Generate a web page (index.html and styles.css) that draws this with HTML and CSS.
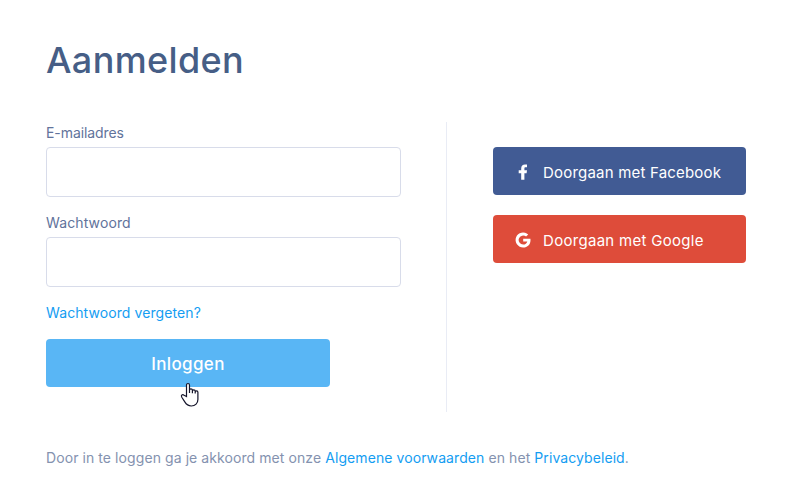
FILE: index.html
```html
<!DOCTYPE html>
<html lang="nl">
<head>
<meta charset="utf-8">
<title>Aanmelden</title>
<link rel="stylesheet" href="styles.css">
</head>
<body>

<main class="login">
  <h1 class="title">Aanmelden</h1>

  <div class="columns">
    <form class="login-form">
      <label class="label label-email" for="email">E-mailadres</label>
      <input class="input" type="email" id="email">

      <label class="label label-password" for="password">Wachtwoord</label>
      <input class="input" type="password" id="password">

      <a class="link forgot" href="#">Wachtwoord vergeten?</a>

      <button class="btn btn-login" type="button">
        <span class="btn-login-text">Inloggen</span>
        <svg class="cursor" width="20" height="26" viewBox="0 0 20 26">
          <path d="M6.5 14.5V3.2c0-2.3 3-2.3 3 0V11V8.200c0-1.700 2.900-1.700 2.900 0V11.300V9c0-1.600 2.800-1.600 2.800 0v2.600V10c0-1.500 2.700-1.500 2.700.2v7.300c0 3.600-2.600 6.500-6.600 6.500-3.200 0-5-1.600-6.500-4.100L1.800 15.200c-1.200-2 .7-3.200 2.300-1.900z"/>
        </svg>
      </button>
    </form>

    <div class="social">
      <a class="btn btn-social facebook" href="#">
        <svg class="icon" width="16" height="16" viewBox="0 0 16 16">
          <path d="M6.200 15.700V9.200H3.700V6.300H6.200V4.400C6.200 1.800 7.700.4 10 .4c1 0 1.700.1 2 .1V3.200h-1.300C9.600 3.200 9.400 3.700 9.400 4.500v1.800H12l-.4 2.900H9.400v6.500z"/>
        </svg>
        <span class="facebook-text">Doorgaan met Facebook</span>
      </a>
      <a class="btn btn-social google" href="#">
        <svg class="icon" width="16" height="16" viewBox="0 0 16 16">
          <path d="M8.200 6.700v2.700h4.100c-.5 1.900-2 3.100-4.100 3.100a4.500 4.500 0 1 1 2.900-7.900l2.100-2.100A7.500 7.500 0 1 0 8.200 15.500c4.300 0 7.300-3 7.300-7.300 0-.5 0-1-.1-1.500z"/>
        </svg>
        <span class="google-text">Doorgaan met Google</span>
      </a>
    </div>
  </div>

  <p class="terms"><span class="terms-intro">Door in te loggen ga je akkoord met onze </span><a class="link terms-link" href="#">Algemene voorwaarden</a> en het <a class="link privacy-link" href="#">Privacybeleid</a>.</p>
</main>

</body>
</html>
```

FILE: styles.css
```css
* {
  box-sizing: border-box;
}

body {
  margin: 0;
  background: #fff;
  font-family: Inter, "Liberation Sans", sans-serif;
  font-size: 14px;
  color: #8492af;
}

.login {
  padding: 36px 45px 0 46px;
}

.title {
  margin: 0;
  height: 86px;
  font-size: 36px;
  line-height: 48px;
  font-weight: 500;
  letter-spacing: 0.35px;
  color: #465e86;
}

.columns {
  display: flex;
  height: 290px;
}

.login-form {
  display: flex;
  flex-direction: column;
  align-items: flex-start;
  width: 401px;
  padding-right: 46px;
  border-right: 1px solid #e9ecf5;
}

.label {
  height: 25px;
  line-height: 22px;
  color: #61739b;
}

.label-email {
  letter-spacing: -0.08px;
}

.label-password {
  letter-spacing: 0.12px;
}

.input {
  width: 355px;
  height: 50px;
  margin-bottom: 15px;
  padding: 0 15px;
  border: 1px solid #d8dcea;
  border-radius: 4px;
  font: inherit;
}

.link {
  color: #149df2;
  text-decoration: none;
}

.forgot {
  height: 37px;
  line-height: 22px;
  letter-spacing: 0.09px;
}

.btn {
  border: 0;
  border-radius: 4px;
  height: 48px;
  color: #fff;
  font-family: inherit;
  text-decoration: none;
}

.btn-login {
  position: relative;
  width: 284px;
  padding: 2px 0 0;
  background: #59b6f5;
  font-size: 17px;
  font-weight: 500;
  letter-spacing: 0.35px;
  cursor: pointer;
}

/* Pointer over the login button */
.cursor {
  position: absolute;
  left: 134px;
  top: 43px;
  fill: #fff;
  stroke: #15152b;
  stroke-width: 1.2;
}

.social {
  flex: 1;
  padding: 25px 0 0 46px;
}

.btn-social {
  display: flex;
  align-items: center;
  margin-bottom: 20px;
  padding: 2px 22px 0;
  font-size: 15px;
  white-space: nowrap;
}

.facebook {
  background: #415b94;
  letter-spacing: 0.2px;
}

.google {
  background: #de4c3a;
  letter-spacing: 0.3px;
}

.icon {
  margin-right: 12px;
  fill: #fff;
}

.terms {
  margin: 35px 0 0;
  line-height: 22px;
  letter-spacing: 0.08px;
  white-space: nowrap;
}
```
